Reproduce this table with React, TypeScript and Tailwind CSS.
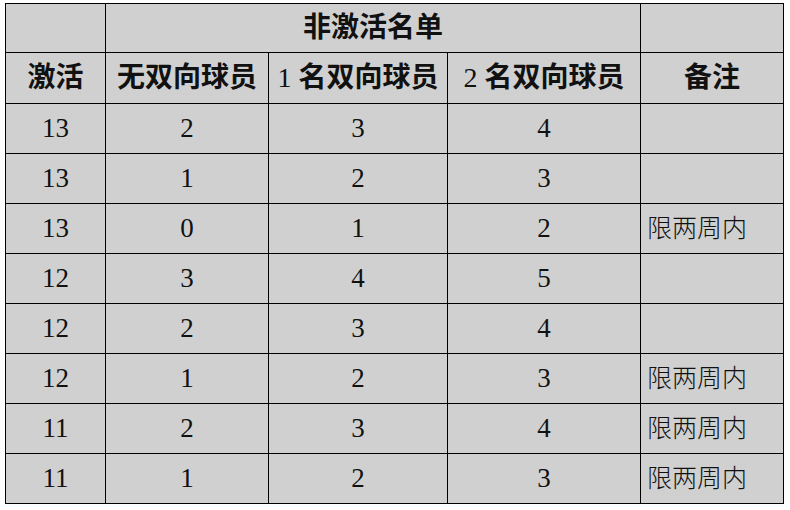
import React from "react";

const rows: [string, string, string, string, string][] = [
  ["13", "2", "3", "4", ""],
  ["13", "1", "2", "3", ""],
  ["13", "0", "1", "2", "限两周内"],
  ["12", "3", "4", "5", ""],
  ["12", "2", "3", "4", ""],
  ["12", "1", "2", "3", "限两周内"],
  ["11", "2", "3", "4", "限两周内"],
  ["11", "1", "2", "3", "限两周内"],
];

const font = { fontFamily: '"Liberation Serif", "Noto Sans CJK SC", serif' };

const headers: [string, string][] = [
  ["", "激活"],
  ["", "无双向球员"],
  ["1 ", "名双向球员"],
  ["2 ", "名双向球员"],
  ["", "备注"],
];

export default function App() {
  return (
    <div className="w-[790px] h-[510px] bg-white pt-[3px] pl-[5px]" style={font}>
      <div className="grid w-fit grid-cols-[99px_162px_178px_192px_142px] grid-rows-[48px_50px_repeat(8,49px)] gap-px bg-black p-px text-[#111]">
        <div className="bg-[#d0d0d0]" />
        <div className="col-span-3 flex items-center justify-center bg-[#d0d0d0] text-[28px] font-semibold leading-none">
          非激活名单
        </div>
        <div className="bg-[#d0d0d0]" />
        {headers.map(([n, h], i) => (
          <div
            key={i}
            className="flex items-center justify-center whitespace-pre bg-[#d0d0d0] text-[28px] leading-none"
          >
            {n && <span className="font-normal">{n}</span>}
            <span className="font-semibold">{h}</span>
          </div>
        ))}
        {rows.map((r, ri) =>
          r.map((c, ci) =>
            ci < 4 ? (
              <div
                key={`${ri}-${ci}`}
                className="flex items-center justify-center bg-[#d0d0d0] text-[27px] leading-none"
              >
                {c}
              </div>
            ) : (
              <div
                key={`${ri}-${ci}`}
                className="flex items-center justify-start bg-[#d0d0d0] pl-[6px] text-[25px] font-light leading-none"
              >
                {c}
              </div>
            )
          )
        )}
      </div>
    </div>
  );
}
